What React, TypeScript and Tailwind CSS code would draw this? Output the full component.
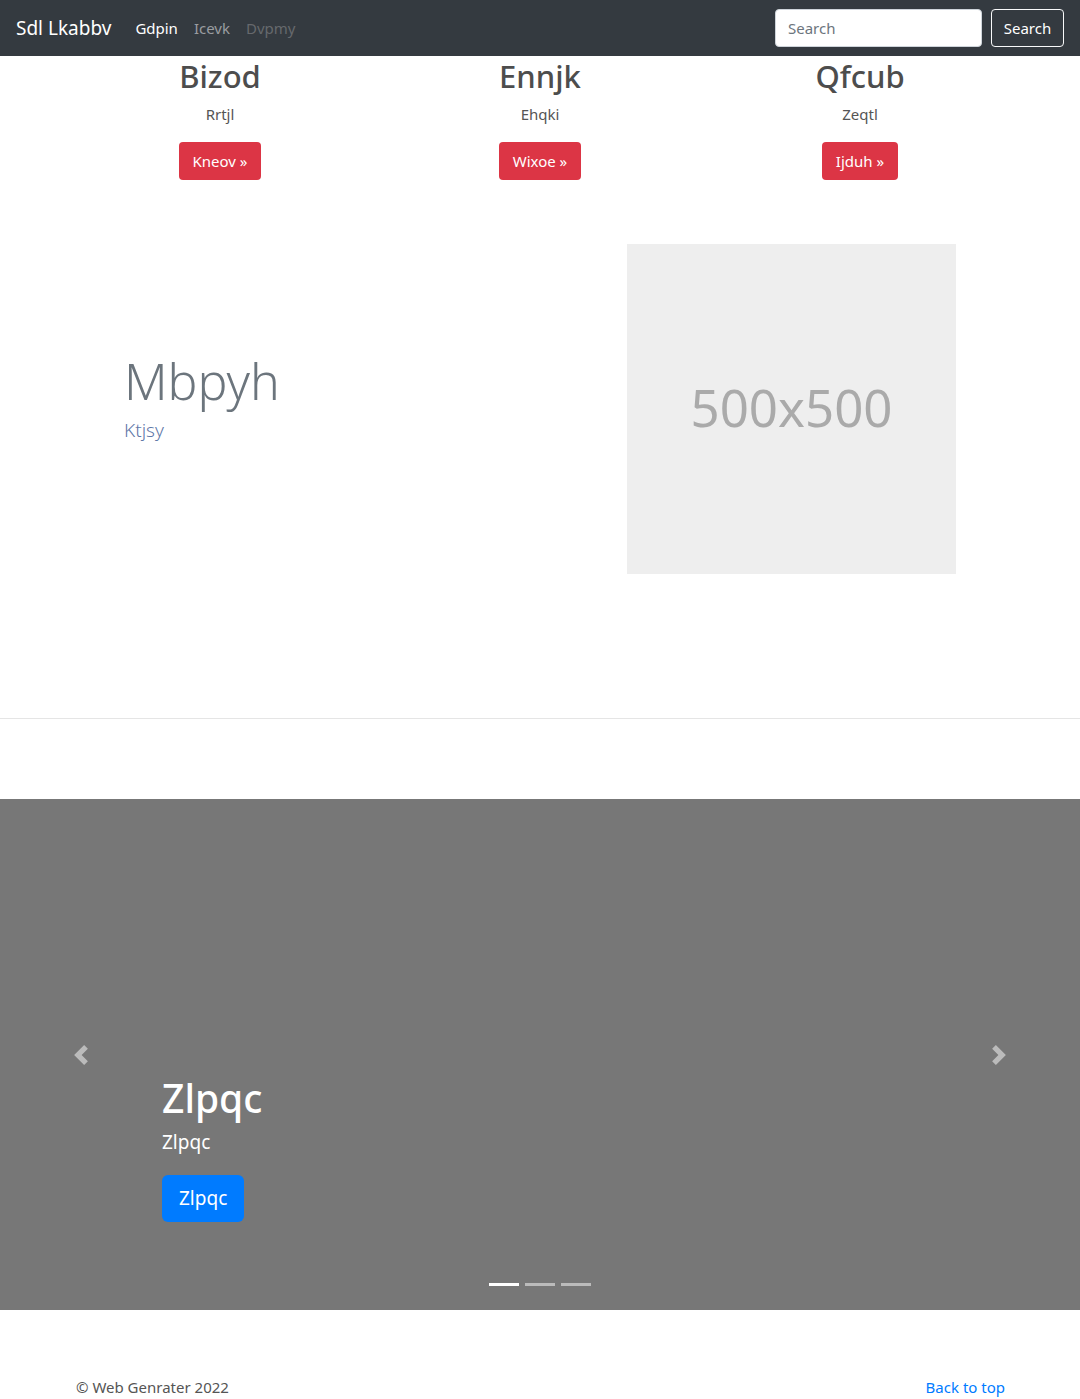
import React from "react";

const font = { fontFamily: '"Noto Sans", "Open Sans", Arial, sans-serif' };

function Chevron({ dir }: { dir: "left" | "right" }) {
  return (
    <svg width="20" height="20" viewBox="0 0 8 8" className="opacity-50">
      {dir === "left" ? (
        <path fill="#fff" d="M5.25 0l-4 4 4 4 1.5-1.5L4.25 4l2.5-2.5L5.25 0z" />
      ) : (
        <path fill="#fff" d="M2.75 0l-1.5 1.5L3.75 4l-2.5 2.5L2.75 8l4-4-4-4z" />
      )}
    </svg>
  );
}

export default function App() {
  const cols = [
    { h: "Bizod", p: "Rrtjl", b: "Kneov" },
    { h: "Ennjk", p: "Ehqki", b: "Wixoe" },
    { h: "Qfcub", p: "Zeqtl", b: "Ijduh" },
  ];
  return (
    <div className="w-[1080px] bg-white text-[#212529]" style={font}>
      {/* Navbar */}
      <nav className="h-[56px] bg-[#343a40] flex items-center px-4">
        <span className="text-white text-[19px] mr-[16px] leading-[30px]">Sdl Lkabbv</span>
        <div className="flex items-center text-[15px]">
          <span className="text-white px-2">Gdpin</span>
          <span className="text-[#9a9da0] px-2">Icevk</span>
          <span className="text-[#66696d] px-2">Dvpmy</span>
        </div>
        <div className="ml-auto flex items-center gap-[9px]">
          <div className="w-[207px] h-[38px] bg-white rounded border border-[#ced4da] flex items-center px-3 text-[#6c757d] text-[15px]">
            Search
          </div>
          <div className="w-[73px] h-[38px] rounded border border-[#f8f9fa] flex items-center justify-center text-white text-[15px]">
            Search
          </div>
        </div>
      </nav>

      {/* three columns */}
      <div className="w-[960px] mx-auto grid grid-cols-3">
        {cols.map((c) => (
          <div key={c.h} className="px-[15px] flex flex-col items-center text-center">
            <h2 className="text-[31px] leading-[38px] font-medium text-[#4d4d4d] mb-2 mt-[1px]">{c.h}</h2>
            <p className="text-[15px] leading-[24px] text-[#555] mb-4 -mt-[1px]">{c.p}</p>
            <div className="h-[38px] px-[14px] rounded bg-[#dc3545] text-white text-[15px] flex items-center">
              {c.b} »
            </div>
          </div>
        ))}
      </div>

      {/* featurette */}
      <div className="w-[960px] mx-auto flex items-center pt-[64px] pb-[144px]">
        <div className="flex-1 pl-[64px] pb-[22px]">
          <h2 className="text-[50px] leading-[60px] font-light text-[#6c757d]">Mbpyh</h2>
          <p className="text-[19px] leading-[30px] font-light text-[#5f78a8] mt-[4px]">Ktjsy</p>
        </div>
        <div className="w-[329px] h-[330px] bg-[#eeeeee] flex items-center justify-center mr-[64px]">
          <span className="text-[51px] text-[#aaaaaa] -mt-[4px]">500x500</span>
        </div>
      </div>

      <hr className="border-0 border-t border-[#e5e5e5]" />

      <div className="h-[80px]" />

      {/* carousel */}
      <div className="relative h-[511px] bg-[#777777]">
        <div className="absolute left-0 top-0 bottom-0 w-[162px] flex items-center justify-center">
          <Chevron dir="left" />
        </div>
        <div className="absolute right-0 top-0 bottom-0 w-[162px] flex items-center justify-center">
          <Chevron dir="right" />
        </div>
        <div className="absolute left-[162px] top-[275px] text-white">
          <h1 className="text-[39px] leading-[48px] font-medium mb-2">Zlpqc</h1>
          <p className="text-[19px] leading-[30px] mb-4 -mt-[3px]">Zlpqc</p>
          <div className="inline-flex h-[47px] px-[17px] rounded-md bg-[#007bff] items-center text-[19px] mt-[2px]">Zlpqc</div>
        </div>
        <div className="absolute bottom-[24px] left-0 right-0 flex justify-center gap-[6px]">
          <span className="block w-[30px] h-[3px] bg-white" />
          <span className="block w-[30px] h-[3px] bg-white opacity-50" />
          <span className="block w-[30px] h-[3px] bg-white opacity-50" />
        </div>
      </div>

      {/* footer */}
      <div className="w-[960px] mx-auto px-[15px] pt-[65px] flex justify-between text-[15px] leading-[24px]">
        <span className="text-[#555] pl-[1px]">© Web Genrater 2022</span>
        <span className="text-[#007bff]">Back to top</span>
      </div>
    </div>
  );
}
